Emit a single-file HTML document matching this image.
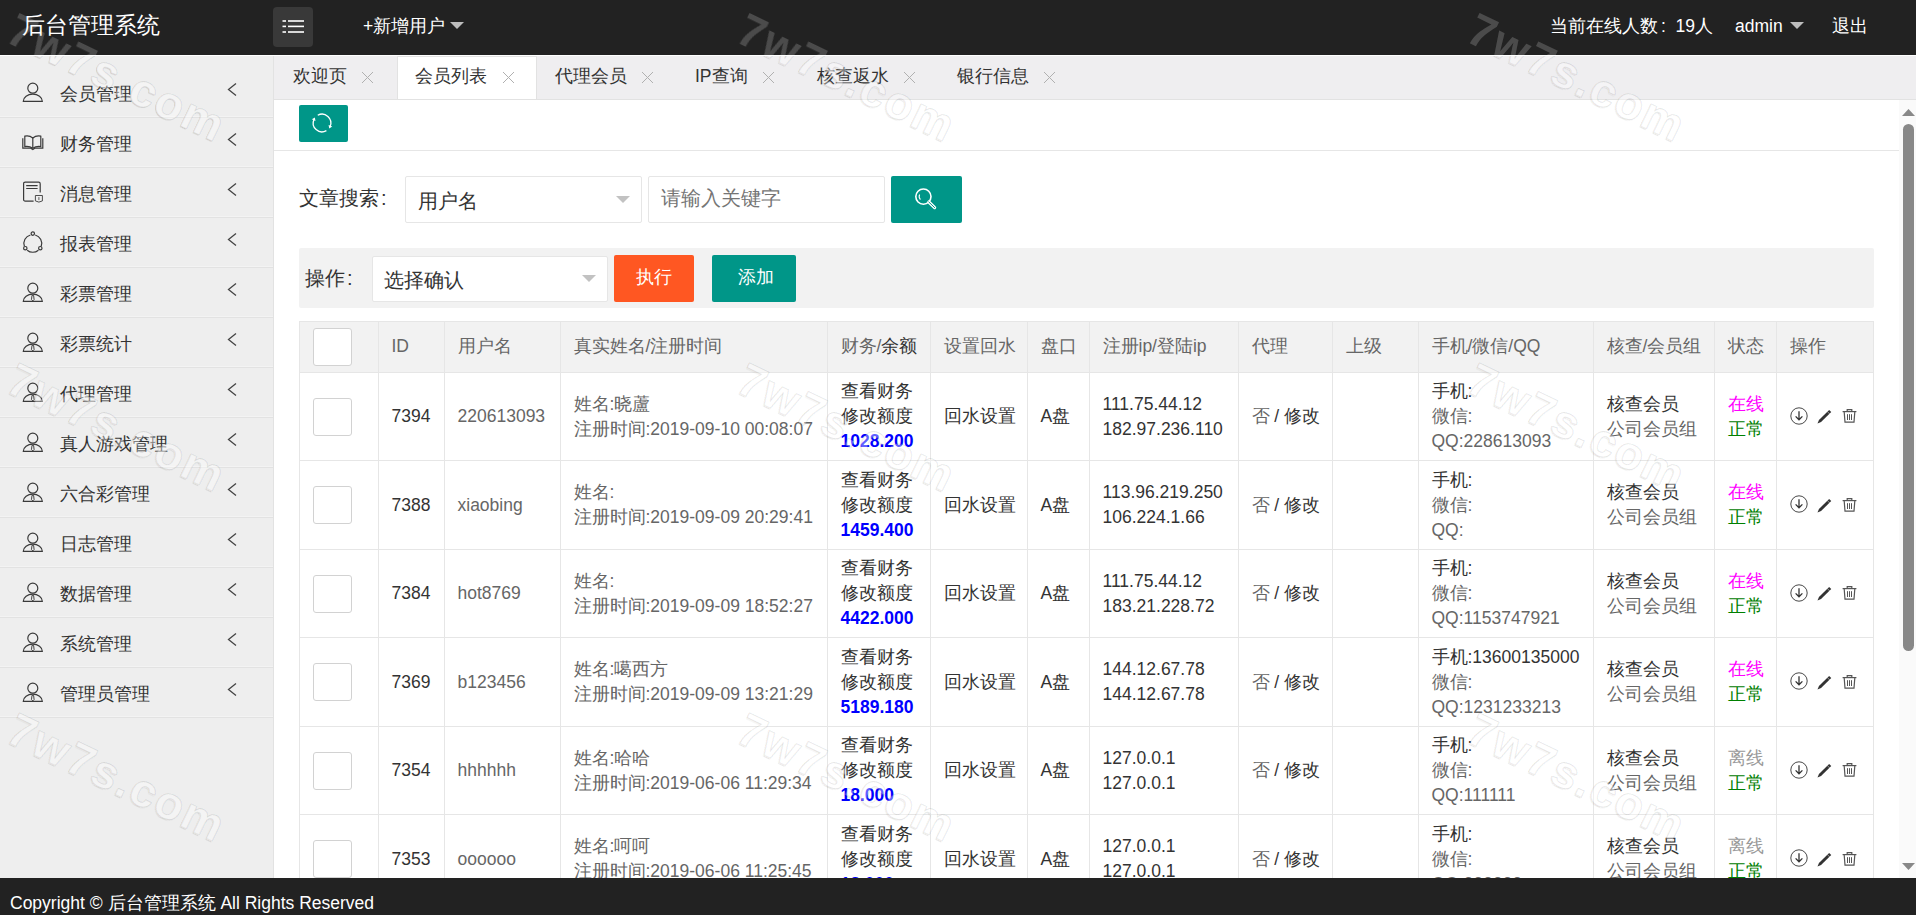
<!DOCTYPE html><html><head><meta charset="utf-8"><title>后台管理系统</title><style>
*{box-sizing:border-box;margin:0;padding:0}
html,body{width:1916px;height:915px;overflow:hidden;background:#fff}
body{position:relative;font-family:"Liberation Sans",sans-serif;color:#333}
.ab{position:absolute}
.t{position:absolute;white-space:nowrap}
#hd{left:0;top:0;width:1916px;height:55px;background:#222}
#side{left:0;top:56px;width:274px;height:822px;background:#eee;border-right:1px solid #e2e2e2}
#tabs{left:274px;top:56px;width:1642px;height:44px;background:#efeef0;border-bottom:1px solid #e2e2e2}
#ft{left:0;top:878px;width:1916px;height:37px;background:#222}
.hl{position:absolute;height:1px;background:#e2e2e2}
.vl{position:absolute;width:1px;background:#e6e6e6}
.tri{position:absolute;width:0;height:0;border-left:7px solid transparent;border-right:7px solid transparent;border-top:7px solid #c2c2c2}
.cb{position:absolute;width:39px;height:38px;border:1px solid #d2d2d2;border-radius:3px;background:#fff}
.cell{position:absolute;font-size:17.5px;line-height:25px;white-space:nowrap}
.g{color:#666}
.d{color:#333}
</style></head><body>
<div id="hd" class="ab"></div>
<div class="t" style="left:22px;top:8px;font-size:22.5px;line-height:36px;color:#fff">后台管理系统</div>
<div class="ab" style="left:273px;top:7px;width:40px;height:40px;background:#393939;border-radius:4px"></div>
<svg class="ab" style="left:273px;top:7px" width="40" height="40" viewBox="0 0 40 40"><g fill="#fff"><rect x="9.5" y="13.2" width="3.5" height="1.6"/><rect x="15" y="13.2" width="16" height="1.6"/><rect x="9.5" y="18.6" width="3.5" height="1.6"/><rect x="15" y="18.6" width="16" height="1.6"/><rect x="9.5" y="24.2" width="3.5" height="1.6"/><rect x="15" y="24.2" width="16" height="1.6"/></g></svg>
<div class="t" style="left:363px;top:14px;font-size:17.5px;line-height:25px;color:#fff">+新增用户</div>
<div class="tri" style="left:450px;top:22px;border-top-color:#bdbdbd"></div>
<div class="t" style="left:1550px;top:14px;font-size:17.5px;line-height:25px;color:#fff">当前在线人数<span style="display:inline-block;width:17.5px;padding-left:3px">:</span>19人</div>
<div class="t" style="left:1735px;top:14px;font-size:17.5px;line-height:25px;color:#fff">admin</div>
<div class="tri" style="left:1790px;top:22px;border-top-color:#bdbdbd"></div>
<div class="t" style="left:1832px;top:14px;font-size:17.5px;line-height:25px;color:#fff">退出</div>
<div class="ab" style="left:0;top:55px;width:1916px;height:1px;background:#fff"></div>
<div id="side" class="ab"></div>
<svg class="ab" style="left:21px;top:81px" width="24" height="24" viewBox="0 0 24 24"><g fill="none" stroke="#3a3a3a" stroke-width="1.2"><circle cx="11.8" cy="7.2" r="5.0"/><path d="M2.3 20.3 A9.5 7.2 0 0 1 21.3 20.3 Z"/></g></svg>
<div class="t" style="left:60px;top:82px;font-size:17.5px;line-height:25px;color:#333">会员管理</div>
<svg class="ab" style="left:226px;top:82px" width="12" height="16" viewBox="0 0 12 16"><polyline points="10,1.5 2.5,7.5 10,13.5" fill="none" stroke="#444" stroke-width="1.3"/></svg>
<div class="hl" style="left:0;top:116px;width:273px;background:#f3f3f3"></div>
<div class="hl" style="left:0;top:117px;width:273px"></div>
<svg class="ab" style="left:21px;top:131px" width="24" height="24" viewBox="0 0 24 24"><g fill="none" stroke="#3a3a3a" stroke-width="1.2"><g transform="translate(0,-2)"><path d="M1.8 9.2 V19.2 H9.8 L11.8 20.6 L13.8 19.2 H21.8 V9.2"/><path d="M3.8 7.2 V17.6 C6.8 17.2 9.4 17.6 11.8 19.2 C14.2 17.6 16.8 17.2 19.8 17.6 V7.2 C16.8 6.6 14 7.2 11.8 9 C9.6 7.2 6.8 6.6 3.8 7.2 Z"/><path d="M11.8 9 V19"/></g></g></svg>
<div class="t" style="left:60px;top:132px;font-size:17.5px;line-height:25px;color:#333">财务管理</div>
<svg class="ab" style="left:226px;top:132px" width="12" height="16" viewBox="0 0 12 16"><polyline points="10,1.5 2.5,7.5 10,13.5" fill="none" stroke="#444" stroke-width="1.3"/></svg>
<div class="hl" style="left:0;top:166px;width:273px;background:#f3f3f3"></div>
<div class="hl" style="left:0;top:167px;width:273px"></div>
<svg class="ab" style="left:21px;top:181px" width="24" height="24" viewBox="0 0 24 24"><g fill="none" stroke="#3a3a3a" stroke-width="1.2"><g transform="translate(0,-1.5)"><path d="M12.6 21.6 H4.2 C3.2 21.6 2.6 21 2.6 20 V4.2 C2.6 3.2 3.2 2.6 4.2 2.6 H17.6 C18.6 2.6 19.2 3.2 19.2 4.2 V13"/><path d="M5.2 6.2 H16.6 M5.2 9 H16.6"/><path d="M14.4 16 H21.4 V21.4 L17.9 22.6 L14.4 21.4 Z" stroke-width="0.9"/><path d="M17.9 17.6 V20.6" stroke-width="0.8"/></g></g></svg>
<div class="t" style="left:60px;top:182px;font-size:17.5px;line-height:25px;color:#333">消息管理</div>
<svg class="ab" style="left:226px;top:182px" width="12" height="16" viewBox="0 0 12 16"><polyline points="10,1.5 2.5,7.5 10,13.5" fill="none" stroke="#444" stroke-width="1.3"/></svg>
<div class="hl" style="left:0;top:216px;width:273px;background:#f3f3f3"></div>
<div class="hl" style="left:0;top:217px;width:273px"></div>
<svg class="ab" style="left:21px;top:231px" width="24" height="24" viewBox="0 0 24 24"><g fill="none" stroke="#3a3a3a" stroke-width="1.2"><g transform="translate(0,-1)"><path d="M9.4 5 A8.6 8.6 0 0 0 3.4 16.2"/><path d="M14.2 5 A8.6 8.6 0 0 1 20.2 16.2"/><path d="M6.2 20.2 A8.6 8.6 0 0 0 17.4 20.2"/><circle cx="11.8" cy="3.6" r="1.7"/><circle cx="4.3" cy="18.2" r="1.7"/><circle cx="19.3" cy="18.2" r="1.7"/></g></g></svg>
<div class="t" style="left:60px;top:232px;font-size:17.5px;line-height:25px;color:#333">报表管理</div>
<svg class="ab" style="left:226px;top:232px" width="12" height="16" viewBox="0 0 12 16"><polyline points="10,1.5 2.5,7.5 10,13.5" fill="none" stroke="#444" stroke-width="1.3"/></svg>
<div class="hl" style="left:0;top:266px;width:273px;background:#f3f3f3"></div>
<div class="hl" style="left:0;top:267px;width:273px"></div>
<svg class="ab" style="left:21px;top:281px" width="24" height="24" viewBox="0 0 24 24"><g fill="none" stroke="#3a3a3a" stroke-width="1.2"><circle cx="11.8" cy="7.2" r="5.0"/><path d="M2.3 20.3 A9.5 7.2 0 0 1 21.3 20.3 Z"/><path d="M11.0 14.3 H12.6 L13.1 18.6 L11.8 19.9 L10.5 18.6 Z" stroke-width="0.95"/></g></svg>
<div class="t" style="left:60px;top:282px;font-size:17.5px;line-height:25px;color:#333">彩票管理</div>
<svg class="ab" style="left:226px;top:282px" width="12" height="16" viewBox="0 0 12 16"><polyline points="10,1.5 2.5,7.5 10,13.5" fill="none" stroke="#444" stroke-width="1.3"/></svg>
<div class="hl" style="left:0;top:316px;width:273px;background:#f3f3f3"></div>
<div class="hl" style="left:0;top:317px;width:273px"></div>
<svg class="ab" style="left:21px;top:331px" width="24" height="24" viewBox="0 0 24 24"><g fill="none" stroke="#3a3a3a" stroke-width="1.2"><circle cx="11.8" cy="7.2" r="5.0"/><path d="M2.3 20.3 A9.5 7.2 0 0 1 21.3 20.3 Z"/><path d="M11.0 14.3 H12.6 L13.1 18.6 L11.8 19.9 L10.5 18.6 Z" stroke-width="0.95"/></g></svg>
<div class="t" style="left:60px;top:332px;font-size:17.5px;line-height:25px;color:#333">彩票统计</div>
<svg class="ab" style="left:226px;top:332px" width="12" height="16" viewBox="0 0 12 16"><polyline points="10,1.5 2.5,7.5 10,13.5" fill="none" stroke="#444" stroke-width="1.3"/></svg>
<div class="hl" style="left:0;top:366px;width:273px;background:#f3f3f3"></div>
<div class="hl" style="left:0;top:367px;width:273px"></div>
<svg class="ab" style="left:21px;top:381px" width="24" height="24" viewBox="0 0 24 24"><g fill="none" stroke="#3a3a3a" stroke-width="1.2"><circle cx="11.8" cy="7.2" r="5.0"/><path d="M2.3 20.3 A9.5 7.2 0 0 1 21.3 20.3 Z"/><path d="M11.0 14.3 H12.6 L13.1 18.6 L11.8 19.9 L10.5 18.6 Z" stroke-width="0.95"/></g></svg>
<div class="t" style="left:60px;top:382px;font-size:17.5px;line-height:25px;color:#333">代理管理</div>
<svg class="ab" style="left:226px;top:382px" width="12" height="16" viewBox="0 0 12 16"><polyline points="10,1.5 2.5,7.5 10,13.5" fill="none" stroke="#444" stroke-width="1.3"/></svg>
<div class="hl" style="left:0;top:416px;width:273px;background:#f3f3f3"></div>
<div class="hl" style="left:0;top:417px;width:273px"></div>
<svg class="ab" style="left:21px;top:431px" width="24" height="24" viewBox="0 0 24 24"><g fill="none" stroke="#3a3a3a" stroke-width="1.2"><circle cx="11.8" cy="7.2" r="5.0"/><path d="M2.3 20.3 A9.5 7.2 0 0 1 21.3 20.3 Z"/><path d="M11.0 14.3 H12.6 L13.1 18.6 L11.8 19.9 L10.5 18.6 Z" stroke-width="0.95"/></g></svg>
<div class="t" style="left:60px;top:432px;font-size:17.5px;line-height:25px;color:#333">真人游戏管理</div>
<svg class="ab" style="left:226px;top:432px" width="12" height="16" viewBox="0 0 12 16"><polyline points="10,1.5 2.5,7.5 10,13.5" fill="none" stroke="#444" stroke-width="1.3"/></svg>
<div class="hl" style="left:0;top:466px;width:273px;background:#f3f3f3"></div>
<div class="hl" style="left:0;top:467px;width:273px"></div>
<svg class="ab" style="left:21px;top:481px" width="24" height="24" viewBox="0 0 24 24"><g fill="none" stroke="#3a3a3a" stroke-width="1.2"><circle cx="11.8" cy="7.2" r="5.0"/><path d="M2.3 20.3 A9.5 7.2 0 0 1 21.3 20.3 Z"/><path d="M11.0 14.3 H12.6 L13.1 18.6 L11.8 19.9 L10.5 18.6 Z" stroke-width="0.95"/></g></svg>
<div class="t" style="left:60px;top:482px;font-size:17.5px;line-height:25px;color:#333">六合彩管理</div>
<svg class="ab" style="left:226px;top:482px" width="12" height="16" viewBox="0 0 12 16"><polyline points="10,1.5 2.5,7.5 10,13.5" fill="none" stroke="#444" stroke-width="1.3"/></svg>
<div class="hl" style="left:0;top:516px;width:273px;background:#f3f3f3"></div>
<div class="hl" style="left:0;top:517px;width:273px"></div>
<svg class="ab" style="left:21px;top:531px" width="24" height="24" viewBox="0 0 24 24"><g fill="none" stroke="#3a3a3a" stroke-width="1.2"><circle cx="11.8" cy="7.2" r="5.0"/><path d="M2.3 20.3 A9.5 7.2 0 0 1 21.3 20.3 Z"/><path d="M11.0 14.3 H12.6 L13.1 18.6 L11.8 19.9 L10.5 18.6 Z" stroke-width="0.95"/></g></svg>
<div class="t" style="left:60px;top:532px;font-size:17.5px;line-height:25px;color:#333">日志管理</div>
<svg class="ab" style="left:226px;top:532px" width="12" height="16" viewBox="0 0 12 16"><polyline points="10,1.5 2.5,7.5 10,13.5" fill="none" stroke="#444" stroke-width="1.3"/></svg>
<div class="hl" style="left:0;top:566px;width:273px;background:#f3f3f3"></div>
<div class="hl" style="left:0;top:567px;width:273px"></div>
<svg class="ab" style="left:21px;top:581px" width="24" height="24" viewBox="0 0 24 24"><g fill="none" stroke="#3a3a3a" stroke-width="1.2"><circle cx="11.8" cy="7.2" r="5.0"/><path d="M2.3 20.3 A9.5 7.2 0 0 1 21.3 20.3 Z"/><path d="M11.0 14.3 H12.6 L13.1 18.6 L11.8 19.9 L10.5 18.6 Z" stroke-width="0.95"/></g></svg>
<div class="t" style="left:60px;top:582px;font-size:17.5px;line-height:25px;color:#333">数据管理</div>
<svg class="ab" style="left:226px;top:582px" width="12" height="16" viewBox="0 0 12 16"><polyline points="10,1.5 2.5,7.5 10,13.5" fill="none" stroke="#444" stroke-width="1.3"/></svg>
<div class="hl" style="left:0;top:616px;width:273px;background:#f3f3f3"></div>
<div class="hl" style="left:0;top:617px;width:273px"></div>
<svg class="ab" style="left:21px;top:631px" width="24" height="24" viewBox="0 0 24 24"><g fill="none" stroke="#3a3a3a" stroke-width="1.2"><circle cx="11.8" cy="7.2" r="5.0"/><path d="M2.3 20.3 A9.5 7.2 0 0 1 21.3 20.3 Z"/><path d="M11.0 14.3 H12.6 L13.1 18.6 L11.8 19.9 L10.5 18.6 Z" stroke-width="0.95"/></g></svg>
<div class="t" style="left:60px;top:632px;font-size:17.5px;line-height:25px;color:#333">系统管理</div>
<svg class="ab" style="left:226px;top:632px" width="12" height="16" viewBox="0 0 12 16"><polyline points="10,1.5 2.5,7.5 10,13.5" fill="none" stroke="#444" stroke-width="1.3"/></svg>
<div class="hl" style="left:0;top:666px;width:273px;background:#f3f3f3"></div>
<div class="hl" style="left:0;top:667px;width:273px"></div>
<svg class="ab" style="left:21px;top:681px" width="24" height="24" viewBox="0 0 24 24"><g fill="none" stroke="#3a3a3a" stroke-width="1.2"><circle cx="11.8" cy="7.2" r="5.0"/><path d="M2.3 20.3 A9.5 7.2 0 0 1 21.3 20.3 Z"/><path d="M11.0 14.3 H12.6 L13.1 18.6 L11.8 19.9 L10.5 18.6 Z" stroke-width="0.95"/></g></svg>
<div class="t" style="left:60px;top:682px;font-size:17.5px;line-height:25px;color:#333">管理员管理</div>
<svg class="ab" style="left:226px;top:682px" width="12" height="16" viewBox="0 0 12 16"><polyline points="10,1.5 2.5,7.5 10,13.5" fill="none" stroke="#444" stroke-width="1.3"/></svg>
<div class="hl" style="left:0;top:716px;width:273px;background:#f3f3f3"></div>
<div class="hl" style="left:0;top:717px;width:273px"></div>
<div id="tabs" class="ab"></div>
<div class="ab" style="left:397px;top:56px;width:140px;height:43px;background:#fff;border:1px solid #e2e2e2;border-bottom:none"></div>
<div class="t" style="left:293px;top:64px;font-size:17.5px;line-height:25px;color:#333">欢迎页</div>
<svg class="ab" style="left:361px;top:71px" width="13" height="13" viewBox="0 0 13 13"><path d="M1 1 L12 12 M12 1 L1 12" stroke="#b0b0b0" stroke-width="1"/></svg>
<div class="t" style="left:415px;top:64px;font-size:17.5px;line-height:25px;color:#333">会员列表</div>
<svg class="ab" style="left:502px;top:71px" width="13" height="13" viewBox="0 0 13 13"><path d="M1 1 L12 12 M12 1 L1 12" stroke="#b0b0b0" stroke-width="1"/></svg>
<div class="t" style="left:555px;top:64px;font-size:17.5px;line-height:25px;color:#333">代理会员</div>
<svg class="ab" style="left:641px;top:71px" width="13" height="13" viewBox="0 0 13 13"><path d="M1 1 L12 12 M12 1 L1 12" stroke="#b0b0b0" stroke-width="1"/></svg>
<div class="t" style="left:695px;top:64px;font-size:17.5px;line-height:25px;color:#333">IP查询</div>
<svg class="ab" style="left:762px;top:71px" width="13" height="13" viewBox="0 0 13 13"><path d="M1 1 L12 12 M12 1 L1 12" stroke="#b0b0b0" stroke-width="1"/></svg>
<div class="t" style="left:817px;top:64px;font-size:17.5px;line-height:25px;color:#333">核查返水</div>
<svg class="ab" style="left:903px;top:71px" width="13" height="13" viewBox="0 0 13 13"><path d="M1 1 L12 12 M12 1 L1 12" stroke="#b0b0b0" stroke-width="1"/></svg>
<div class="t" style="left:957px;top:64px;font-size:17.5px;line-height:25px;color:#333">银行信息</div>
<svg class="ab" style="left:1043px;top:71px" width="13" height="13" viewBox="0 0 13 13"><path d="M1 1 L12 12 M12 1 L1 12" stroke="#b0b0b0" stroke-width="1"/></svg>
<div class="ab" style="left:299px;top:105px;width:49px;height:37px;background:#009688;border-radius:2px"></div>
<svg class="ab" style="left:310px;top:110.5px" width="24" height="24" viewBox="0 0 24 24"><g fill="none" stroke="#fff" stroke-width="1.3"><path d="M7.73 4.30 A8.8 8.8 0 0 1 20.1 15.44"/><path d="M16.4 19.62 A8.8 8.8 0 0 1 3.96 8.42"/></g><g fill="#fff"><path d="M19.24 17.47 L22.25 15.48 L18.57 13.92 Z"/><path d="M4.86 6.41 L1.80 8.34 L5.46 9.96 Z"/></g></svg>
<div class="hl" style="left:274px;top:150px;width:1625px;background:#e6e6e6"></div>
<div class="t" style="left:299px;top:184px;font-size:20px;line-height:28px;color:#333">文章搜索<span style="margin-left:2px">:</span></div>
<div class="ab" style="left:405px;top:176px;width:237px;height:47px;border:1px solid #e6e6e6;border-radius:2px;background:#fff"></div>
<div class="t" style="left:418px;top:187px;font-size:20px;line-height:28px;color:#333">用户名</div>
<div class="tri" style="left:616px;top:196px"></div>
<div class="ab" style="left:648px;top:176px;width:237px;height:47px;border:1px solid #e6e6e6;border-radius:2px;background:#fff"></div>
<div class="t" style="left:661px;top:184px;font-size:20px;line-height:28px;color:#757575">请输入关键字</div>
<div class="ab" style="left:891px;top:176px;width:71px;height:47px;background:#009688;border-radius:2px"></div>
<svg class="ab" style="left:912px;top:185px" width="26" height="26" viewBox="0 0 26 26"><g fill="none" stroke="#fff"><circle cx="11.4" cy="11.6" r="7.6" stroke-width="1.6"/><path d="M16.8 17 L22.6 22.6" stroke-width="3.2" stroke-linecap="round"/><path d="M7.6 9.6 A4.6 4.6 0 0 0 8.4 14.6" stroke-width="1.1"/></g><path d="M16.8 17 L22.6 22.6" stroke="#009688" stroke-width="1" stroke-linecap="round"/></svg>
<div class="ab" style="left:299px;top:248px;width:1575px;height:60px;background:#f2f2f2;border-radius:2px"></div>
<div class="t" style="left:305px;top:264px;font-size:20px;line-height:28px;color:#333">操作<span style="margin-left:2px">:</span></div>
<div class="ab" style="left:372px;top:256px;width:236px;height:46px;border:1px solid #e6e6e6;border-radius:2px;background:#fff"></div>
<div class="t" style="left:384px;top:266px;font-size:20px;line-height:28px;color:#333">选择确认</div>
<div class="tri" style="left:582px;top:275px"></div>
<div class="ab" style="left:614px;top:255px;width:80px;height:47px;background:#FF5722;border-radius:2px"></div>
<div class="t" style="left:636px;top:265px;font-size:18px;line-height:25px;color:#fff">执行</div>
<div class="ab" style="left:712px;top:255px;width:84px;height:47px;background:#009688;border-radius:2px"></div>
<div class="t" style="left:738px;top:265px;font-size:18px;line-height:25px;color:#fff">添加</div>
<div class="ab" style="left:300px;top:322px;width:1573px;height:50px;background:#f2f2f2"></div>
<div class="hl" style="left:299px;top:321px;width:1575px;background:#e6e6e6"></div>
<div class="hl" style="left:299px;top:372px;width:1575px;background:#e6e6e6"></div>
<div class="hl" style="left:299px;top:460px;width:1575px;background:#e6e6e6"></div>
<div class="hl" style="left:299px;top:549px;width:1575px;background:#e6e6e6"></div>
<div class="hl" style="left:299px;top:637px;width:1575px;background:#e6e6e6"></div>
<div class="hl" style="left:299px;top:726px;width:1575px;background:#e6e6e6"></div>
<div class="hl" style="left:299px;top:814px;width:1575px;background:#e6e6e6"></div>
<div class="vl" style="left:299px;top:321px;height:557px"></div>
<div class="vl" style="left:378px;top:321px;height:557px"></div>
<div class="vl" style="left:444px;top:321px;height:557px"></div>
<div class="vl" style="left:560px;top:321px;height:557px"></div>
<div class="vl" style="left:827px;top:321px;height:557px"></div>
<div class="vl" style="left:930px;top:321px;height:557px"></div>
<div class="vl" style="left:1027px;top:321px;height:557px"></div>
<div class="vl" style="left:1089px;top:321px;height:557px"></div>
<div class="vl" style="left:1238px;top:321px;height:557px"></div>
<div class="vl" style="left:1332px;top:321px;height:557px"></div>
<div class="vl" style="left:1418px;top:321px;height:557px"></div>
<div class="vl" style="left:1593px;top:321px;height:557px"></div>
<div class="vl" style="left:1714px;top:321px;height:557px"></div>
<div class="vl" style="left:1776px;top:321px;height:557px"></div>
<div class="vl" style="left:1873px;top:321px;height:557px"></div>
<div class="cell" style="left:391.5px;top:333.5px"><span class="g">ID</span></div>
<div class="cell" style="left:457.5px;top:333.5px"><span class="g">用户名</span></div>
<div class="cell" style="left:573.5px;top:333.5px"><span class="g">真实姓名/注册时间</span></div>
<div class="cell" style="left:840.5px;top:333.5px"><span class="g">财务/</span><span class="d">余额</span></div>
<div class="cell" style="left:943.5px;top:333.5px"><span class="g">设置回水</span></div>
<div class="cell" style="left:1040.5px;top:333.5px"><span class="g">盘口</span></div>
<div class="cell" style="left:1102.5px;top:333.5px"><span class="g">注册ip/登陆ip</span></div>
<div class="cell" style="left:1251.5px;top:333.5px"><span class="g">代理</span></div>
<div class="cell" style="left:1345.5px;top:333.5px"><span class="g">上级</span></div>
<div class="cell" style="left:1431.5px;top:333.5px"><span class="g">手机/微信/QQ</span></div>
<div class="cell" style="left:1606.5px;top:333.5px"><span class="g">核查/会员组</span></div>
<div class="cell" style="left:1727.5px;top:333.5px"><span class="g">状态</span></div>
<div class="cell" style="left:1789.5px;top:333.5px"><span class="g">操作</span></div>
<div class="cb" style="left:313px;top:328px"></div>
<div class="cb" style="left:313px;top:398px"></div>
<div class="cell" style="left:391.5px;top:404.0px"><span class="d">7394</span></div>
<div class="cell" style="left:457.5px;top:404.0px"><span class="g">220613093</span></div>
<div class="cell" style="left:573.5px;top:391.5px"><span class="g">姓名:晓蘆</span><br><span class="g">注册时间:2019-09-10 00:08:07</span></div>
<div class="cell" style="left:840.5px;top:379.0px"><span class="d">查看财务</span><br><span class="d">修改额度</span><br><b style="color:#00f">1028.200</b></div>
<div class="cell" style="left:943.5px;top:404.0px"><span class="d">回水设置</span></div>
<div class="cell" style="left:1040.5px;top:404.0px"><span class="d">A盘</span></div>
<div class="cell" style="left:1102.5px;top:391.5px"><span class="d">111.75.44.12</span><br><span class="d">182.97.236.110</span></div>
<div class="cell" style="left:1251.5px;top:404.0px"><span class="g">否</span><span class="d"> / 修改</span></div>
<div class="cell" style="left:1431.5px;top:379.0px"><span class="d">手机:</span><br><span class="g">微信:</span><br><span class="g">QQ:228613093</span></div>
<div class="cell" style="left:1606.5px;top:391.5px"><span class="d">核查会员</span><br><span class="g">公司会员组</span></div>
<div class="cell" style="left:1727.5px;top:391.5px"><span style="color:#f0f">在线</span><br><span style="color:#008000">正常</span></div>
<div class="ab" style="left:1790px;top:406.5px;line-height:0"><svg width="18" height="18" viewBox="0 0 18 18"><circle cx="9" cy="9" r="8.2" fill="none" stroke="#333" stroke-width="0.9"/><path d="M9 4.2 V12.6 M5.6 9.4 L9 12.8 L12.4 9.4" fill="none" stroke="#333" stroke-width="1.3"/></svg></div>
<div class="ab" style="left:1816px;top:409.0px;line-height:0"><svg width="16" height="16" viewBox="0 0 16 16"><path d="M1.5 14.4 L2.95 10.88 L13.15 0.93 L15.25 3.07 L5.05 13.02 Z" fill="#333"/><path d="M13.6 4.9 L11.4 2.6" stroke="#fff" stroke-width="0.5"/></svg></div>
<div class="ab" style="left:1842px;top:408.0px;line-height:0"><svg width="15" height="15" viewBox="0 0 15 15"><g fill="none" stroke="#555" stroke-width="1.2"><path d="M0.6 3.6 H14.4"/><path d="M5.2 3.4 V1.6 H9.8 V3.4"/><path d="M2.2 4 L3 14.2 H12 L12.8 4"/><path d="M5.5 6.2 V12 M7.5 6.2 V12 M9.5 6.2 V12" stroke-width="1"/></g></svg></div>
<div class="cb" style="left:313px;top:486px"></div>
<div class="cell" style="left:391.5px;top:492.5px"><span class="d">7388</span></div>
<div class="cell" style="left:457.5px;top:492.5px"><span class="g">xiaobing</span></div>
<div class="cell" style="left:573.5px;top:480.0px"><span class="g">姓名:</span><br><span class="g">注册时间:2019-09-09 20:29:41</span></div>
<div class="cell" style="left:840.5px;top:467.5px"><span class="d">查看财务</span><br><span class="d">修改额度</span><br><b style="color:#00f">1459.400</b></div>
<div class="cell" style="left:943.5px;top:492.5px"><span class="d">回水设置</span></div>
<div class="cell" style="left:1040.5px;top:492.5px"><span class="d">A盘</span></div>
<div class="cell" style="left:1102.5px;top:480.0px"><span class="d">113.96.219.250</span><br><span class="d">106.224.1.66</span></div>
<div class="cell" style="left:1251.5px;top:492.5px"><span class="g">否</span><span class="d"> / 修改</span></div>
<div class="cell" style="left:1431.5px;top:467.5px"><span class="d">手机:</span><br><span class="g">微信:</span><br><span class="g">QQ:</span></div>
<div class="cell" style="left:1606.5px;top:480.0px"><span class="d">核查会员</span><br><span class="g">公司会员组</span></div>
<div class="cell" style="left:1727.5px;top:480.0px"><span style="color:#f0f">在线</span><br><span style="color:#008000">正常</span></div>
<div class="ab" style="left:1790px;top:495.0px;line-height:0"><svg width="18" height="18" viewBox="0 0 18 18"><circle cx="9" cy="9" r="8.2" fill="none" stroke="#333" stroke-width="0.9"/><path d="M9 4.2 V12.6 M5.6 9.4 L9 12.8 L12.4 9.4" fill="none" stroke="#333" stroke-width="1.3"/></svg></div>
<div class="ab" style="left:1816px;top:497.5px;line-height:0"><svg width="16" height="16" viewBox="0 0 16 16"><path d="M1.5 14.4 L2.95 10.88 L13.15 0.93 L15.25 3.07 L5.05 13.02 Z" fill="#333"/><path d="M13.6 4.9 L11.4 2.6" stroke="#fff" stroke-width="0.5"/></svg></div>
<div class="ab" style="left:1842px;top:496.5px;line-height:0"><svg width="15" height="15" viewBox="0 0 15 15"><g fill="none" stroke="#555" stroke-width="1.2"><path d="M0.6 3.6 H14.4"/><path d="M5.2 3.4 V1.6 H9.8 V3.4"/><path d="M2.2 4 L3 14.2 H12 L12.8 4"/><path d="M5.5 6.2 V12 M7.5 6.2 V12 M9.5 6.2 V12" stroke-width="1"/></g></svg></div>
<div class="cb" style="left:313px;top:575px"></div>
<div class="cell" style="left:391.5px;top:581.0px"><span class="d">7384</span></div>
<div class="cell" style="left:457.5px;top:581.0px"><span class="g">hot8769</span></div>
<div class="cell" style="left:573.5px;top:568.5px"><span class="g">姓名:</span><br><span class="g">注册时间:2019-09-09 18:52:27</span></div>
<div class="cell" style="left:840.5px;top:556.0px"><span class="d">查看财务</span><br><span class="d">修改额度</span><br><b style="color:#00f">4422.000</b></div>
<div class="cell" style="left:943.5px;top:581.0px"><span class="d">回水设置</span></div>
<div class="cell" style="left:1040.5px;top:581.0px"><span class="d">A盘</span></div>
<div class="cell" style="left:1102.5px;top:568.5px"><span class="d">111.75.44.12</span><br><span class="d">183.21.228.72</span></div>
<div class="cell" style="left:1251.5px;top:581.0px"><span class="g">否</span><span class="d"> / 修改</span></div>
<div class="cell" style="left:1431.5px;top:556.0px"><span class="d">手机:</span><br><span class="g">微信:</span><br><span class="g">QQ:1153747921</span></div>
<div class="cell" style="left:1606.5px;top:568.5px"><span class="d">核查会员</span><br><span class="g">公司会员组</span></div>
<div class="cell" style="left:1727.5px;top:568.5px"><span style="color:#f0f">在线</span><br><span style="color:#008000">正常</span></div>
<div class="ab" style="left:1790px;top:583.5px;line-height:0"><svg width="18" height="18" viewBox="0 0 18 18"><circle cx="9" cy="9" r="8.2" fill="none" stroke="#333" stroke-width="0.9"/><path d="M9 4.2 V12.6 M5.6 9.4 L9 12.8 L12.4 9.4" fill="none" stroke="#333" stroke-width="1.3"/></svg></div>
<div class="ab" style="left:1816px;top:586.0px;line-height:0"><svg width="16" height="16" viewBox="0 0 16 16"><path d="M1.5 14.4 L2.95 10.88 L13.15 0.93 L15.25 3.07 L5.05 13.02 Z" fill="#333"/><path d="M13.6 4.9 L11.4 2.6" stroke="#fff" stroke-width="0.5"/></svg></div>
<div class="ab" style="left:1842px;top:585.0px;line-height:0"><svg width="15" height="15" viewBox="0 0 15 15"><g fill="none" stroke="#555" stroke-width="1.2"><path d="M0.6 3.6 H14.4"/><path d="M5.2 3.4 V1.6 H9.8 V3.4"/><path d="M2.2 4 L3 14.2 H12 L12.8 4"/><path d="M5.5 6.2 V12 M7.5 6.2 V12 M9.5 6.2 V12" stroke-width="1"/></g></svg></div>
<div class="cb" style="left:313px;top:663px"></div>
<div class="cell" style="left:391.5px;top:669.5px"><span class="d">7369</span></div>
<div class="cell" style="left:457.5px;top:669.5px"><span class="g">b123456</span></div>
<div class="cell" style="left:573.5px;top:657.0px"><span class="g">姓名:噶西方</span><br><span class="g">注册时间:2019-09-09 13:21:29</span></div>
<div class="cell" style="left:840.5px;top:644.5px"><span class="d">查看财务</span><br><span class="d">修改额度</span><br><b style="color:#00f">5189.180</b></div>
<div class="cell" style="left:943.5px;top:669.5px"><span class="d">回水设置</span></div>
<div class="cell" style="left:1040.5px;top:669.5px"><span class="d">A盘</span></div>
<div class="cell" style="left:1102.5px;top:657.0px"><span class="d">144.12.67.78</span><br><span class="d">144.12.67.78</span></div>
<div class="cell" style="left:1251.5px;top:669.5px"><span class="g">否</span><span class="d"> / 修改</span></div>
<div class="cell" style="left:1431.5px;top:644.5px"><span class="d">手机:13600135000</span><br><span class="g">微信:</span><br><span class="g">QQ:1231233213</span></div>
<div class="cell" style="left:1606.5px;top:657.0px"><span class="d">核查会员</span><br><span class="g">公司会员组</span></div>
<div class="cell" style="left:1727.5px;top:657.0px"><span style="color:#f0f">在线</span><br><span style="color:#008000">正常</span></div>
<div class="ab" style="left:1790px;top:672.0px;line-height:0"><svg width="18" height="18" viewBox="0 0 18 18"><circle cx="9" cy="9" r="8.2" fill="none" stroke="#333" stroke-width="0.9"/><path d="M9 4.2 V12.6 M5.6 9.4 L9 12.8 L12.4 9.4" fill="none" stroke="#333" stroke-width="1.3"/></svg></div>
<div class="ab" style="left:1816px;top:674.5px;line-height:0"><svg width="16" height="16" viewBox="0 0 16 16"><path d="M1.5 14.4 L2.95 10.88 L13.15 0.93 L15.25 3.07 L5.05 13.02 Z" fill="#333"/><path d="M13.6 4.9 L11.4 2.6" stroke="#fff" stroke-width="0.5"/></svg></div>
<div class="ab" style="left:1842px;top:673.5px;line-height:0"><svg width="15" height="15" viewBox="0 0 15 15"><g fill="none" stroke="#555" stroke-width="1.2"><path d="M0.6 3.6 H14.4"/><path d="M5.2 3.4 V1.6 H9.8 V3.4"/><path d="M2.2 4 L3 14.2 H12 L12.8 4"/><path d="M5.5 6.2 V12 M7.5 6.2 V12 M9.5 6.2 V12" stroke-width="1"/></g></svg></div>
<div class="cb" style="left:313px;top:752px"></div>
<div class="cell" style="left:391.5px;top:758.0px"><span class="d">7354</span></div>
<div class="cell" style="left:457.5px;top:758.0px"><span class="g">hhhhhh</span></div>
<div class="cell" style="left:573.5px;top:745.5px"><span class="g">姓名:哈哈</span><br><span class="g">注册时间:2019-06-06 11:29:34</span></div>
<div class="cell" style="left:840.5px;top:733.0px"><span class="d">查看财务</span><br><span class="d">修改额度</span><br><b style="color:#00f">18.000</b></div>
<div class="cell" style="left:943.5px;top:758.0px"><span class="d">回水设置</span></div>
<div class="cell" style="left:1040.5px;top:758.0px"><span class="d">A盘</span></div>
<div class="cell" style="left:1102.5px;top:745.5px"><span class="d">127.0.0.1</span><br><span class="d">127.0.0.1</span></div>
<div class="cell" style="left:1251.5px;top:758.0px"><span class="g">否</span><span class="d"> / 修改</span></div>
<div class="cell" style="left:1431.5px;top:733.0px"><span class="d">手机:</span><br><span class="g">微信:</span><br><span class="g">QQ:111111</span></div>
<div class="cell" style="left:1606.5px;top:745.5px"><span class="d">核查会员</span><br><span class="g">公司会员组</span></div>
<div class="cell" style="left:1727.5px;top:745.5px"><span style="color:#999">离线</span><br><span style="color:#008000">正常</span></div>
<div class="ab" style="left:1790px;top:760.5px;line-height:0"><svg width="18" height="18" viewBox="0 0 18 18"><circle cx="9" cy="9" r="8.2" fill="none" stroke="#333" stroke-width="0.9"/><path d="M9 4.2 V12.6 M5.6 9.4 L9 12.8 L12.4 9.4" fill="none" stroke="#333" stroke-width="1.3"/></svg></div>
<div class="ab" style="left:1816px;top:763.0px;line-height:0"><svg width="16" height="16" viewBox="0 0 16 16"><path d="M1.5 14.4 L2.95 10.88 L13.15 0.93 L15.25 3.07 L5.05 13.02 Z" fill="#333"/><path d="M13.6 4.9 L11.4 2.6" stroke="#fff" stroke-width="0.5"/></svg></div>
<div class="ab" style="left:1842px;top:762.0px;line-height:0"><svg width="15" height="15" viewBox="0 0 15 15"><g fill="none" stroke="#555" stroke-width="1.2"><path d="M0.6 3.6 H14.4"/><path d="M5.2 3.4 V1.6 H9.8 V3.4"/><path d="M2.2 4 L3 14.2 H12 L12.8 4"/><path d="M5.5 6.2 V12 M7.5 6.2 V12 M9.5 6.2 V12" stroke-width="1"/></g></svg></div>
<div class="cb" style="left:313px;top:840px"></div>
<div class="cell" style="left:391.5px;top:846.5px"><span class="d">7353</span></div>
<div class="cell" style="left:457.5px;top:846.5px"><span class="g">oooooo</span></div>
<div class="cell" style="left:573.5px;top:834.0px"><span class="g">姓名:呵呵</span><br><span class="g">注册时间:2019-06-06 11:25:45</span></div>
<div class="cell" style="left:840.5px;top:821.5px"><span class="d">查看财务</span><br><span class="d">修改额度</span><br><b style="color:#00f">18.000</b></div>
<div class="cell" style="left:943.5px;top:846.5px"><span class="d">回水设置</span></div>
<div class="cell" style="left:1040.5px;top:846.5px"><span class="d">A盘</span></div>
<div class="cell" style="left:1102.5px;top:834.0px"><span class="d">127.0.0.1</span><br><span class="d">127.0.0.1</span></div>
<div class="cell" style="left:1251.5px;top:846.5px"><span class="g">否</span><span class="d"> / 修改</span></div>
<div class="cell" style="left:1431.5px;top:821.5px"><span class="d">手机:</span><br><span class="g">微信:</span><br><span class="g">QQ:222222</span></div>
<div class="cell" style="left:1606.5px;top:834.0px"><span class="d">核查会员</span><br><span class="g">公司会员组</span></div>
<div class="cell" style="left:1727.5px;top:834.0px"><span style="color:#999">离线</span><br><span style="color:#008000">正常</span></div>
<div class="ab" style="left:1790px;top:849.0px;line-height:0"><svg width="18" height="18" viewBox="0 0 18 18"><circle cx="9" cy="9" r="8.2" fill="none" stroke="#333" stroke-width="0.9"/><path d="M9 4.2 V12.6 M5.6 9.4 L9 12.8 L12.4 9.4" fill="none" stroke="#333" stroke-width="1.3"/></svg></div>
<div class="ab" style="left:1816px;top:851.5px;line-height:0"><svg width="16" height="16" viewBox="0 0 16 16"><path d="M1.5 14.4 L2.95 10.88 L13.15 0.93 L15.25 3.07 L5.05 13.02 Z" fill="#333"/><path d="M13.6 4.9 L11.4 2.6" stroke="#fff" stroke-width="0.5"/></svg></div>
<div class="ab" style="left:1842px;top:850.5px;line-height:0"><svg width="15" height="15" viewBox="0 0 15 15"><g fill="none" stroke="#555" stroke-width="1.2"><path d="M0.6 3.6 H14.4"/><path d="M5.2 3.4 V1.6 H9.8 V3.4"/><path d="M2.2 4 L3 14.2 H12 L12.8 4"/><path d="M5.5 6.2 V12 M7.5 6.2 V12 M9.5 6.2 V12" stroke-width="1"/></g></svg></div>
<div class="ab" style="left:1899px;top:100px;width:17px;height:778px;background:#fafafa"></div>
<svg class="ab" style="left:1899px;top:100px" width="17" height="778" viewBox="0 0 17 778"><path d="M3 16 L9.5 9 L16 16 Z" fill="#888"/><path d="M3 763 L9.5 770 L16 763 Z" fill="#888"/></svg>
<div class="ab" style="left:1903px;top:124px;width:11px;height:527px;background:#888;border-radius:5.5px"></div>
<div id="ft_mask" class="ab" style="left:274px;top:878px;width:1642px;height:37px;background:#222"></div>
<div id="ft" class="ab"></div>
<div class="t" style="left:10px;top:891px;font-size:17.5px;line-height:25px;color:#fff">Copyright © 后台管理系统 All Rights Reserved</div>
<svg class="ab" style="left:0;top:0;pointer-events:none" width="1916" height="915" viewBox="0 0 1916 915"><defs><filter id="sh" x="-10%" y="-10%" width="120%" height="120%"><feDropShadow dx="-0.8" dy="0.8" stdDeviation="0.5" flood-color="#000" flood-opacity="0.3"/></filter><clipPath id="c1"><rect x="0" y="0" width="1916" height="55"/></clipPath><clipPath id="c2"><rect x="0" y="56" width="1916" height="822"/></clipPath></defs><g font-family="Liberation Sans" font-weight="bold" font-size="46" fill="#fff" opacity="0.19" clip-path="url(#c1)"><text x="4" y="40.5" transform="rotate(25.8 4 40.5)" textLength="234" lengthAdjust="spacing">7w7s.com</text><text x="734" y="40.5" transform="rotate(25.8 734 40.5)" textLength="234" lengthAdjust="spacing">7w7s.com</text><text x="1464" y="40.5" transform="rotate(25.8 1464 40.5)" textLength="234" lengthAdjust="spacing">7w7s.com</text><text x="4" y="390.5" transform="rotate(25.8 4 390.5)" textLength="234" lengthAdjust="spacing">7w7s.com</text><text x="734" y="390.5" transform="rotate(25.8 734 390.5)" textLength="234" lengthAdjust="spacing">7w7s.com</text><text x="1464" y="390.5" transform="rotate(25.8 1464 390.5)" textLength="234" lengthAdjust="spacing">7w7s.com</text><text x="4" y="740.5" transform="rotate(25.8 4 740.5)" textLength="234" lengthAdjust="spacing">7w7s.com</text><text x="734" y="740.5" transform="rotate(25.8 734 740.5)" textLength="234" lengthAdjust="spacing">7w7s.com</text><text x="1464" y="740.5" transform="rotate(25.8 1464 740.5)" textLength="234" lengthAdjust="spacing">7w7s.com</text></g><g clip-path="url(#c2)"><g font-family="Liberation Sans" font-weight="bold" font-size="46" fill="none" stroke="#000" stroke-opacity="0.1" stroke-width="1.1"><text x="4" y="40.5" transform="rotate(25.8 4 40.5)" textLength="234" lengthAdjust="spacing">7w7s.com</text><text x="734" y="40.5" transform="rotate(25.8 734 40.5)" textLength="234" lengthAdjust="spacing">7w7s.com</text><text x="1464" y="40.5" transform="rotate(25.8 1464 40.5)" textLength="234" lengthAdjust="spacing">7w7s.com</text><text x="4" y="390.5" transform="rotate(25.8 4 390.5)" textLength="234" lengthAdjust="spacing">7w7s.com</text><text x="734" y="390.5" transform="rotate(25.8 734 390.5)" textLength="234" lengthAdjust="spacing">7w7s.com</text><text x="1464" y="390.5" transform="rotate(25.8 1464 390.5)" textLength="234" lengthAdjust="spacing">7w7s.com</text><text x="4" y="740.5" transform="rotate(25.8 4 740.5)" textLength="234" lengthAdjust="spacing">7w7s.com</text><text x="734" y="740.5" transform="rotate(25.8 734 740.5)" textLength="234" lengthAdjust="spacing">7w7s.com</text><text x="1464" y="740.5" transform="rotate(25.8 1464 740.5)" textLength="234" lengthAdjust="spacing">7w7s.com</text></g><g font-family="Liberation Sans" font-weight="bold" font-size="46" fill="#fff" opacity="0.38" filter="url(#sh)"><text x="4" y="40.5" transform="rotate(25.8 4 40.5)" textLength="234" lengthAdjust="spacing">7w7s.com</text><text x="734" y="40.5" transform="rotate(25.8 734 40.5)" textLength="234" lengthAdjust="spacing">7w7s.com</text><text x="1464" y="40.5" transform="rotate(25.8 1464 40.5)" textLength="234" lengthAdjust="spacing">7w7s.com</text><text x="4" y="390.5" transform="rotate(25.8 4 390.5)" textLength="234" lengthAdjust="spacing">7w7s.com</text><text x="734" y="390.5" transform="rotate(25.8 734 390.5)" textLength="234" lengthAdjust="spacing">7w7s.com</text><text x="1464" y="390.5" transform="rotate(25.8 1464 390.5)" textLength="234" lengthAdjust="spacing">7w7s.com</text><text x="4" y="740.5" transform="rotate(25.8 4 740.5)" textLength="234" lengthAdjust="spacing">7w7s.com</text><text x="734" y="740.5" transform="rotate(25.8 734 740.5)" textLength="234" lengthAdjust="spacing">7w7s.com</text><text x="1464" y="740.5" transform="rotate(25.8 1464 740.5)" textLength="234" lengthAdjust="spacing">7w7s.com</text></g></g></svg>
</body></html>
